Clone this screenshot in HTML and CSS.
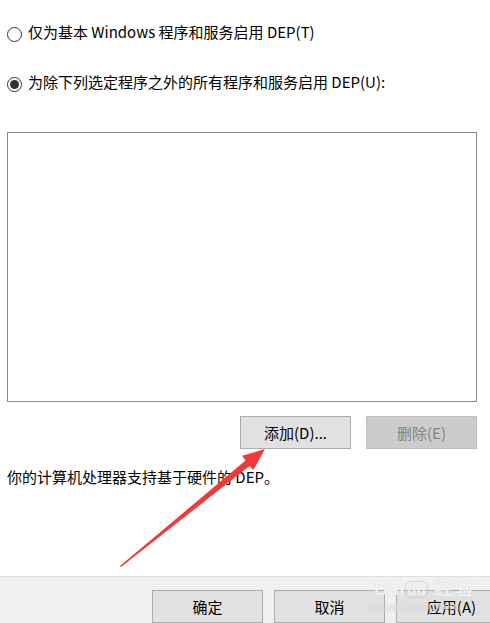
FILE: index.html
```html
<!DOCTYPE html>
<html lang="zh-CN">
<head>
<meta charset="utf-8">
<title>DEP</title>
<link rel="stylesheet" href="styles.css">
</head>
<body>
<div class="page">
  <div class="content">
    <label class="radio-row first">
      <span class="radio"></span>
      <span class="label">仅为基本 Windows 程序和服务启用 DEP(T)</span>
    </label>
    <label class="radio-row second">
      <span class="radio checked"><span class="dot"></span></span>
      <span class="label">为除下列选定程序之外的所有程序和服务启用 DEP(U):</span>
    </label>
    <div class="listbox"></div>
    <div class="list-actions">
      <button class="btn">添加(D)...</button>
      <button class="btn disabled">删除(E)</button>
    </div>
    <p class="note">你的计算机处理器支持基于硬件的 DEP。</p>
  </div>
  <div class="footer">
    <button class="btn">确定</button>
    <button class="btn">取消</button>
    <button class="btn">应用(A)</button>
  </div>
  <div class="watermark">
    <div class="wm-top">Bai<span class="wm-du">du</span> 经验</div>
    <div class="wm-bottom">jingyan.baidu.com</div>
  </div>
  <svg class="arrow" width="490" height="623" viewBox="0 0 490 623">
    <polygon points="120,566 121,567 249.5,466 253.4,470 265,449 242.2,455.7 245.5,460.5" fill="#f03a3a"/>
  </svg>
</div>
</body>
</html>
```
FILE: styles.css
```css
html, body {
  margin: 0;
  padding: 0;
  background: #ffffff;
}
body {
  font-family: "Noto Sans CJK SC", "Microsoft YaHei", sans-serif;
  font-size: 15px;
  color: #000000;
  overflow: hidden;
}
.page {
  position: relative;
  width: 490px;
  height: 623px;
  display: flex;
  flex-direction: column;
  overflow: hidden;
}
.content {
  padding: 0 13px 0 7px;
  display: flex;
  flex-direction: column;
}
.radio-row {
  display: flex;
  align-items: center;
  height: 20px;
  line-height: 20px;
}
.radio-row.first {
  margin-top: 24px;
}
.radio-row.second {
  margin-top: 30px;
}
.radio {
  width: 13px;
  height: 13px;
  border: 1px solid #333333;
  border-radius: 50%;
  display: flex;
  align-items: center;
  justify-content: center;
  margin-right: 6px;
  flex: none;
  background: #fff;
}
.radio .dot {
  width: 9px;
  height: 9px;
  border-radius: 50%;
  background: #333333;
}
.label {
  white-space: nowrap;
  color: #000;
  padding-bottom: 4px;
}
.listbox {
  margin-top: 38px;
  height: 268px;
  border: 1px solid #8a8b8d;
  background: #fff;
}
.list-actions {
  margin-top: 14px;
  display: flex;
  justify-content: flex-end;
  gap: 15px;
}
.btn {
  width: 111px;
  height: 33px;
  border: 1px solid #adadad;
  background: #e1e1e1;
  font-family: inherit;
  font-size: 15px;
  color: #000;
  padding: 0;
  margin: 0;
  line-height: 20px;
  flex: none;
}
.btn.disabled {
  background: #cccccc;
  border-color: #bfbfbf;
  color: #838383;
}
.note {
  margin: 18px 0 0 0;
  line-height: 20px;
  white-space: nowrap;
}
.footer {
  margin-top: auto;
  height: 33px;
  border-top: 1px solid #dfdfdf;
  background: #f0f0f0;
  display: flex;
  gap: 11px;
  padding: 13px 0 0 152px;
  box-sizing: content-box;
}
.arrow {
  position: absolute;
  left: 0;
  top: 0;
  pointer-events: none;
}
.watermark {
  position: absolute;
  left: 374px;
  top: 579px;
  color: rgba(255, 255, 255, 0.75);
  font-family: "Liberation Sans", sans-serif;
  pointer-events: none;
  text-shadow: 0 0 1px rgba(180, 180, 180, 0.6);
}
.wm-top {
  font-size: 19px;
  font-weight: bold;
  line-height: 20px;
  letter-spacing: 0.5px;
}
.wm-du {
  display: inline-block;
  border: 1px solid rgba(200, 200, 200, 0.7);
  border-radius: 6px;
  padding: 0 1px;
  font-size: 15px;
  line-height: 15px;
}
.wm-bottom {
  font-size: 11px;
  line-height: 14px;
  margin-left: -4px;
  color: rgba(235, 235, 235, 0.8);
}
```
